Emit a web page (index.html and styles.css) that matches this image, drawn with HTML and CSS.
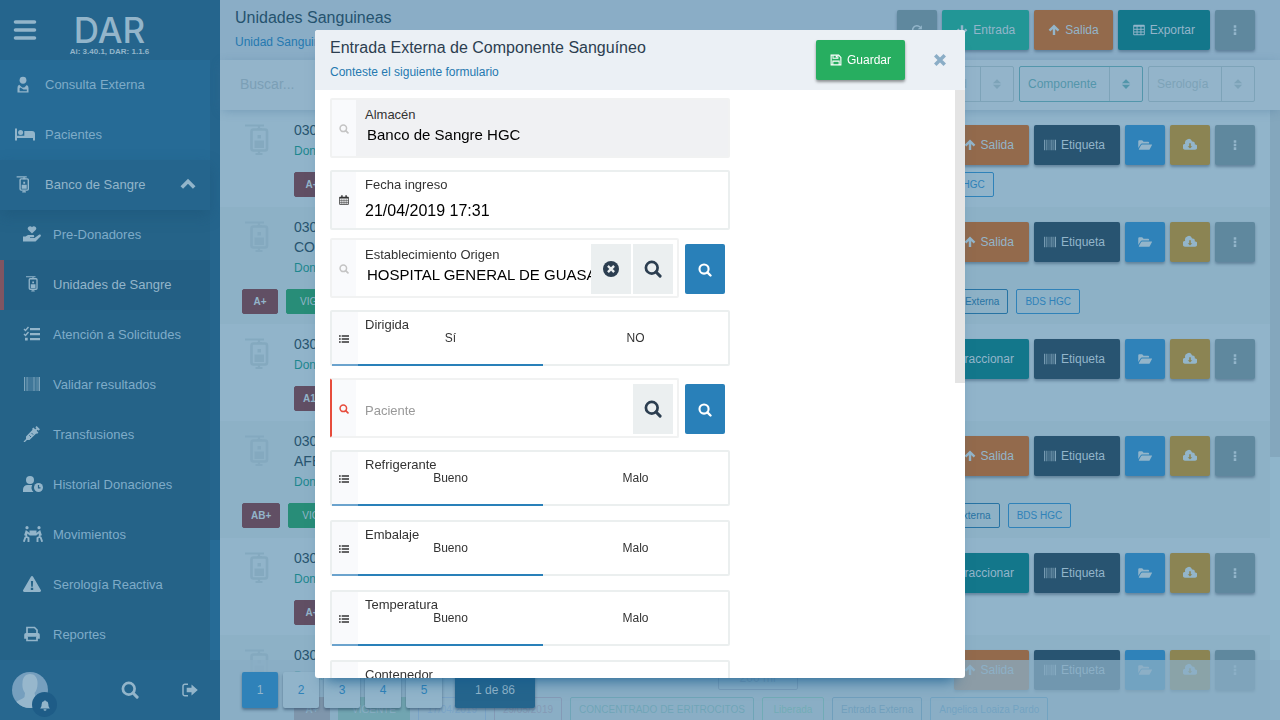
FILE: index.html
```html
<!DOCTYPE html>
<html lang="es">
<head>
<meta charset="utf-8">
<title>Unidades Sanguineas</title>
<link rel="stylesheet" href="styles.css">
</head>
<body>
<svg class="sprite" aria-hidden="true">
  <symbol id="i-search" viewBox="0 0 16 16"><circle cx="6.900" cy="6.900" r="5.200" fill="none" stroke="currentColor" stroke-width="2.400"/><path d="M10.700 10.700l3.600 3.600" stroke="currentColor" stroke-width="2.700" stroke-linecap="round"/></symbol>
  <symbol id="i-up" viewBox="0 0 16 16"><path d="M8 14.5V3M2 8.800L8 2.8l6 6" fill="none" stroke="currentColor" stroke-width="3.200"/></symbol>
  <symbol id="i-down" viewBox="0 0 16 16"><path d="M8 1.500V13M2 7.200L8 13.200l6-6" fill="none" stroke="currentColor" stroke-width="3.200"/></symbol>
  <symbol id="i-table" viewBox="0 0 16 16"><path fill-rule="evenodd" d="M1.500 1h13a1.200 1.200 0 0 1 1.200 1.200v11.600a1.200 1.200 0 0 1-1.200 1.200h-13A1.200 1.200 0 0 1 .3 13.800V2.200A1.200 1.200 0 0 1 1.500 1zM1.500 3.800v2.600h3.300V3.800zm4.500 0v2.600h4V3.800zm5.200 0v2.600h3.300V3.800zM1.500 7.600v2.400h3.300V7.600zm4.500 0v2.400h4V7.600zm5.200 0v2.400h3.300V7.600zM1.500 11.200v2.500h3.300v-2.500zm4.500 0v2.500h4v-2.500zm5.200 0v2.500h3.300v-2.500z" fill="currentColor"/></symbol>
  <symbol id="i-dots" viewBox="0 0 16 16"><path d="M6.300 1.500h3.400v3.400H6.300zM6.300 6.300h3.400v3.400H6.300zM6.300 11.100h3.400v3.400H6.300z" fill="currentColor"/></symbol>
  <symbol id="i-refresh" viewBox="0 0 16 16"><path d="M13 10.500A5.700 5.700 0 1 1 12 4" fill="none" stroke="currentColor" stroke-width="2"/><path d="M14.500 1.500V7H9z" fill="currentColor"/></symbol>
  <symbol id="i-barcode" viewBox="0 0 16 16"><path d="M0 1h1.200v14H0zM14.500 1H16v14h-1.500z" fill="currentColor" opacity=".8"/><path d="M2.200 1h2v14h-2zM9 1h2.500v14H9zM12.300 1h1.500v14h-1.500z" fill="currentColor" opacity=".5"/><path d="M4.200 1h4.800v14H4.200z" fill="currentColor" opacity=".25"/></symbol>
  <symbol id="i-folder" viewBox="0 0 16 16"><path d="M.3 11.500V3.800a1.200 1.200 0 0 1 1.200-1.200h3.300L6.300 4.200h5.200a1.200 1.200 0 0 1 1.200 1.200v1H4.600a2 2 0 0 0-1.700 1z" fill="currentColor"/><path d="M4.600 7.400h11c.4 0 .6.400.4.700l-2.600 4.700a1.200 1.200 0 0 1-1 .600H1.400c-.4 0-.600-.400-.400-.700l2.600-4.700a1.200 1.200 0 0 1 1-.6z" fill="currentColor"/></symbol>
  <symbol id="i-cloud" viewBox="0 0 16 16"><path fill-rule="evenodd" d="M13.400 7a2.400 2.400 0 0 0-3-3A4 4 0 0 0 2.500 6.500 3.500 3.500 0 0 0 3.500 13.500h9.300A3.200 3.200 0 0 0 13.400 7zM10.600 9.300L8 11.900 5.400 9.300h1.700V5.900h1.800v3.400z" fill="currentColor"/></symbol>
  <symbol id="i-sort" viewBox="0 0 16 16"><path d="M2.500 7L8 1.500 13.500 7zM2.500 9L8 14.500 13.500 9z" fill="currentColor"/></symbol>
  <symbol id="i-save" viewBox="0 0 16 16"><path d="M1.500 1.500h10l3 3v10h-13z" fill="none" stroke="currentColor" stroke-width="1.500"/><path d="M4 1.500v4.200h6.500V1.500M3.800 14.500V9.500h8.400v5" fill="none" stroke="currentColor" stroke-width="1.400"/><path d="M7.700 2h1.800v2.700H7.700z" fill="currentColor"/></symbol>
  <symbol id="i-close" viewBox="0 0 16 16"><path d="M4 4l8 8M12 4l-8 8" stroke="currentColor" stroke-width="4" stroke-linecap="square"/></symbol>
  <symbol id="i-clear" viewBox="0 0 16 16"><circle cx="8" cy="8" r="8" fill="currentColor"/><path d="M5.800 5.800l4.400 4.400M10.200 5.800l-4.400 4.400" stroke="#ebeff0" stroke-width="2.400" stroke-linecap="square"/></symbol>
  <symbol id="i-calendar" viewBox="0 0 16 16"><path d="M1 3.500h14V15H1z" fill="none" stroke="currentColor" stroke-width="1.300"/><path d="M1 3h14v2.500H1zM3.500.5h2.300v4H3.500zM10.200.5h2.300v4h-2.300z" fill="currentColor"/><path d="M4.500 6v9M8 6v9M11.500 6v9M1 9h14M1 12h14" stroke="currentColor" stroke-width=".8"/></symbol>
  <symbol id="i-list" viewBox="0 0 16 16"><path d="M0 2h2.700v2.400H0zM0 6.800h2.700v2.400H0zM0 11.600h2.700V14H0zM4.300 2H16v2.400H4.300zM4.300 6.800H16v2.400H4.300zM4.300 11.600H16V14H4.300z" fill="currentColor"/></symbol>
  <symbol id="i-menu" viewBox="0 0 24 20"><path d="M2.500 2h19M2.500 10h19M2.500 18h19" stroke="currentColor" stroke-width="3.600" stroke-linecap="round"/></symbol>
  <symbol id="i-doctor" viewBox="0 0 16 20"><circle cx="8" cy="5" r="4" fill="currentColor"/><path fill-rule="evenodd" d="M1.500 19.500V14a4 4 0 0 1 2-3.700L7 13.500h2.500l3-3a4 4 0 0 1 2 3.500v5.500zM4 17.800h8.500v-2H8.600L5 13.500l-1 1z" fill="currentColor"/></symbol>
  <symbol id="i-bed" viewBox="0 0 20 16"><path d="M0 2.500h2v7.200h7.300V5H17a3 3 0 0 1 3 3v6.500h-2V12H2v2.500H0z" fill="currentColor"/><circle cx="5.600" cy="6.600" r="2.500" fill="currentColor"/></symbol>
  <symbol id="i-bag" viewBox="0 0 24 32"><path d="M0 1.500h19M14 1v4M14 27v4M10.500 30h7" fill="none" stroke="currentColor" stroke-width="2.200"/><rect x="6.500" y="5.500" width="15.500" height="21" rx="2" fill="none" stroke="currentColor" stroke-width="2.600"/><path d="M9.500 16.500H19V24H9.500zM12.500 11h3.500v3.500h-3.500zM12 4h5v2h-5z" fill="currentColor"/></symbol>
  <symbol id="i-hand" viewBox="0 0 18 16"><path d="M9 7.500L5.400 4a2.200 2.200 0 0 1 0-3A2.300 2.300 0 0 1 9 1.300 2.300 2.300 0 0 1 12.600 1a2.200 2.200 0 0 1 0 3zM0 10.500h2.500L5 9h5c1.600 0 1.600 2.300 0 2.300H7v.700h4.500L16 8.700c1.300-.8 2.600.7 1.500 1.800L12.500 15.500H0z" fill="currentColor"/></symbol>
  <symbol id="i-tasks" viewBox="0 0 16 16"><path d="M0 3l1.500 1.500L4.500 1M0 8l1.500 1.500L4.500 6" fill="none" stroke="currentColor" stroke-width="1.400"/><path d="M6 2h10v2.200H6zM6 7h10v2.200H6zM6 12h10v2.200H6zM1 11.800h2.700v2.700H1z" fill="currentColor"/></symbol>
  <symbol id="i-syringe" viewBox="0 0 16 16"><path d="M0 16l3-3" stroke="currentColor" stroke-width="1.300"/><path d="M2 14v-3.500L9.300 3 13 6.700 5.500 14zM8 3l1.400-1.400 5 5L13 8z" fill="currentColor"/><path d="M11.500 4.500l2-2M12 .7L15.300 4" stroke="currentColor" stroke-width="1.800"/><path d="M5.300 9.300l1.700 1.700M7.500 7l1.700 1.700" stroke="#256388" stroke-width=".9"/></symbol>
  <symbol id="i-userclock" viewBox="0 0 20 16"><circle cx="7" cy="4" r="4" fill="currentColor"/><path d="M0 16v-2.500A4.500 4.500 0 0 1 4.500 9h4.700a6 6 0 0 0 1.300 7z" fill="currentColor"/><circle cx="15.500" cy="11.500" r="4.500" fill="currentColor"/><path d="M15.500 9v2.800h2" fill="none" stroke="#256388" stroke-width="1.200"/></symbol>
  <symbol id="i-carry" viewBox="0 0 20 16"><circle cx="4" cy="1.700" r="1.600" fill="currentColor"/><circle cx="16" cy="1.700" r="1.600" fill="currentColor"/><path d="M6.500 4.500h7v5h-7z" fill="currentColor"/><path d="M2 9.500L3.300 5.500 7 8.500M3.300 6v4.500L5.500 12v4M2.500 11L.8 15.800M18 9.500l-1.300-4L13 8.500M16.700 6v4.500L14.500 12v4M17.500 11l1.700 4.800" fill="none" stroke="currentColor" stroke-width="1.900"/></symbol>
  <symbol id="i-warn" viewBox="0 0 18 16"><path fill-rule="evenodd" d="M7.900.7a1.300 1.300 0 0 1 2.200 0l7.700 13.200a1.300 1.300 0 0 1-1.100 2H1.300a1.300 1.300 0 0 1-1.100-2zM7.900 5l.3 5.700h1.600l.3-5.700zM7.800 11.800v2.100h2.400v-2.100z" fill="currentColor"/></symbol>
  <symbol id="i-print" viewBox="0 0 16 16"><path d="M3 8V1.500h7.500L13 4v4M3 11v3.500h10V11" fill="none" stroke="currentColor" stroke-width="1.700"/><path d="M2 7h12a1.800 1.800 0 0 1 1.800 1.800v4H12.500v-2h-9v2H.2v-4A1.800 1.800 0 0 1 2 7z" fill="currentColor"/></symbol>
  <symbol id="i-chevron" viewBox="0 0 16 12"><path d="M1.800 9.500L8 3.300l6.200 6.200" fill="none" stroke="currentColor" stroke-width="3.600"/></symbol>
  <symbol id="i-exit" viewBox="0 0 16 14"><path d="M6 1.200H3A1.900 1.900 0 0 0 1 3.100v7.800a1.900 1.900 0 0 0 2 1.900h3" fill="none" stroke="currentColor" stroke-width="1.500"/><path d="M4.700 4.700h4.800V1.500l6.300 5.500-6.300 5.500V9.300H4.700z" fill="currentColor"/></symbol>
  <symbol id="i-bell" viewBox="0 0 16 16"><path d="M1.500 12.500C3 11 3.500 9.500 3.500 7A4.500 4.500 0 0 1 7 2.600a1 1 0 0 1 2 0A4.500 4.500 0 0 1 12.500 7c0 2.500.5 4 2 5.500zM6 13.500h4a2 2 0 0 1-4 0z" fill="currentColor"/></symbol>
</svg>

<div class="app">
  <aside class="sidebar">
    <header class="brand">
      <button class="plain" aria-label="Menú"><svg class="menu-icon"><use href="#i-menu"/></svg></button>
      <div class="logo"><strong>DAR</strong><small>Ai: 3.40.1, DAR: 1.1.6</small></div>
    </header>
    <nav class="nav">
      <a href="#"><svg class="slim"><use href="#i-doctor"/></svg>Consulta Externa</a>
      <a href="#"><svg class="ic20"><use href="#i-bed"/></svg>Pacientes</a>
      <a href="#" class="open"><svg class="slim"><use href="#i-bag"/></svg>Banco de Sangre<svg class="chev"><use href="#i-chevron"/></svg></a>
      <div class="sub">
        <a href="#"><svg><use href="#i-hand"/></svg>Pre-Donadores</a>
        <a href="#" class="current"><svg><use href="#i-bag"/></svg>Unidades de Sangre</a>
        <a href="#"><svg><use href="#i-tasks"/></svg>Atención a Solicitudes</a>
        <a href="#"><svg><use href="#i-barcode"/></svg>Validar resultados</a>
        <a href="#"><svg><use href="#i-syringe"/></svg>Transfusiones</a>
        <a href="#"><svg class="wide"><use href="#i-userclock"/></svg>Historial Donaciones</a>
        <a href="#"><svg class="wide"><use href="#i-carry"/></svg>Movimientos</a>
        <a href="#"><svg><use href="#i-warn"/></svg>Serología Reactiva</a>
        <a href="#"><svg><use href="#i-print"/></svg>Reportes</a>
      </div>
    </nav>
    <footer class="userbar">
      <button class="plain user" aria-label="Usuario">
        <svg class="avatar" viewBox="0 0 36 36"><defs><clipPath id="face"><circle cx="18" cy="18" r="18"/></clipPath></defs><g clip-path="url(#face)"><path d="M0 0h36v36H0z" fill="#769fbe"/><path d="M18 2c5 0 8 4 7.500 10 0 3-1 7-3 9l1 4c2 2 9 3 10 8v4H2v-4c2-5 8-5 10.500-8l.5-4c-2-3-3-6-2.500-10C10.500 6 13 2 18 2z" fill="#97b7cc"/></g></svg>
        <span class="bell"><svg><use href="#i-bell"/></svg></span>
      </button>
      <button class="plain" aria-label="Buscar"><svg class="ic18"><use href="#i-search"/></svg></button>
      <button class="plain" aria-label="Salir"><svg class="ic16"><use href="#i-exit"/></svg></button>
    </footer>
  </aside>

  <main class="main">
    <header class="topbar">
      <div class="titles"><h1>Unidades Sanguineas</h1><a href="#">Unidad Sanguinea</a></div>
      <div class="actions">
        <button class="btn gray" aria-label="Actualizar"><svg><use href="#i-refresh"/></svg></button>
        <button class="btn teal"><svg><use href="#i-down"/></svg>Entrada</button>
        <button class="btn orange"><svg><use href="#i-up"/></svg>Salida</button>
        <button class="btn cyan"><svg><use href="#i-table"/></svg>Exportar</button>
        <button class="btn gray" aria-label="Más"><svg><use href="#i-dots"/></svg></button>
      </div>
    </header>
    <div class="filters">
      <input type="text" placeholder="Buscar..." aria-label="Buscar">
      <div class="combo"><select aria-label="Unidad"><option>Unidad</option></select><svg><use href="#i-sort"/></svg></div>
      <div class="combo on"><select aria-label="Componente"><option>Componente</option></select><svg><use href="#i-sort"/></svg></div>
      <div class="combo"><select aria-label="Serología"><option>Serología</option></select><svg><use href="#i-sort"/></svg></div>
    </div>
    <div class="content">
      <div class="rows" id="rows"></div>
      <div class="track"><div class="thumb"></div></div>
      <div class="pager">
        <button class="page now">1</button><button class="page">2</button><button class="page">3</button><button class="page">4</button><button class="page">5</button>
        <span class="count">1 de 86</span>
      </div>
    </div>
  </main>
</div>

<div class="overlay">
  <section class="modal" role="dialog" aria-labelledby="modal-title">
    <header class="modal-head">
      <div class="titles"><h2 id="modal-title">Entrada Externa de Componente Sanguíneo</h2><p>Conteste el siguiente formulario</p></div>
      <button class="btn save"><svg><use href="#i-save"/></svg>Guardar</button>
      <button class="plain close" aria-label="Cerrar"><svg class="ic14"><use href="#i-close"/></svg></button>
    </header>
    <div class="modal-body">
      <form class="form">
        <div class="line">
          <div class="field locked"><span class="mark faint"><svg><use href="#i-search"/></svg></span>
            <div class="control"><label for="almacen">Almacén</label><input id="almacen" type="text" value="Banco de Sangre HGC" readonly></div></div>
        </div>
        <div class="line low">
          <div class="field date"><span class="mark"><svg><use href="#i-calendar"/></svg></span>
            <div class="control"><label for="fecha">Fecha ingreso</label><input id="fecha" type="text" value="21/04/2019 17:31"></div></div>
        </div>
        <div class="line">
          <div class="field"><span class="mark faint"><svg><use href="#i-search"/></svg></span>
            <div class="control"><label for="origen">Establecimiento Origen</label><input id="origen" type="text" value="HOSPITAL GENERAL DE GUASAVE"></div>
            <button type="button" class="tool" aria-label="Borrar"><svg class="ic16"><use href="#i-clear"/></svg></button>
            <button type="button" class="tool" aria-label="Buscar"><svg class="ic18"><use href="#i-search"/></svg></button></div>
          <button type="button" class="lookup" aria-label="Buscar establecimiento"><svg class="ic14"><use href="#i-search"/></svg></button>
        </div>
        <div class="line low"><fieldset class="field seg"><legend>Dirigida</legend><span class="mark"><svg><use href="#i-list"/></svg></span>
          <label><input type="radio" name="dirigida" checked>Sí</label><label><input type="radio" name="dirigida">NO</label></fieldset></div>
        <div class="line">
          <div class="field needed"><span class="mark red"><svg><use href="#i-search"/></svg></span>
            <div class="control empty"><input type="text" placeholder="Paciente" aria-label="Paciente"></div>
            <button type="button" class="tool" aria-label="Buscar"><svg class="ic18"><use href="#i-search"/></svg></button></div>
          <button type="button" class="lookup" aria-label="Buscar paciente"><svg class="ic14"><use href="#i-search"/></svg></button>
        </div>
        <div class="line low"><fieldset class="field seg"><legend>Refrigerante</legend><span class="mark"><svg><use href="#i-list"/></svg></span>
          <label><input type="radio" name="refrigerante" checked>Bueno</label><label><input type="radio" name="refrigerante">Malo</label></fieldset></div>
        <div class="line low"><fieldset class="field seg"><legend>Embalaje</legend><span class="mark"><svg><use href="#i-list"/></svg></span>
          <label><input type="radio" name="embalaje" checked>Bueno</label><label><input type="radio" name="embalaje">Malo</label></fieldset></div>
        <div class="line low"><fieldset class="field seg"><legend>Temperatura</legend><span class="mark"><svg><use href="#i-list"/></svg></span>
          <label><input type="radio" name="temperatura" checked>Bueno</label><label><input type="radio" name="temperatura">Malo</label></fieldset></div>
        <div class="line low"><fieldset class="field seg"><legend>Contenedor</legend><span class="mark"><svg><use href="#i-list"/></svg></span>
          <label><input type="radio" name="contenedor" checked>Bueno</label><label><input type="radio" name="contenedor">Malo</label></fieldset></div>
      </form>
      <div class="track"><div class="thumb"></div></div>
    </div>
  </section>
</div>
<script src="rows.js"></script>
</body>
</html>
```

FILE: styles.css
```css
* { box-sizing: border-box; }
html, body { height: 100%; }
body {
  margin: 0;
  overflow: hidden;
  font-family: "Liberation Sans", Arial, sans-serif;
  font-size: 13px;
  color: #333;
}
button, input, select { font: inherit; color: inherit; }
a { text-decoration: none; color: inherit; }
h1, h2, p { margin: 0; font-weight: 400; }
svg { flex: none; }
.sprite { position: absolute; width: 0; height: 0; }
.plain { display: flex; align-items: center; justify-content: center; padding: 0; border: 0; background: none; }
.ic14 { width: 14px; height: 14px; }
.ic16 { width: 16px; height: 16px; }
.ic18 { width: 18px; height: 18px; }
.ic20 { width: 20px; height: 18px; }

.app { display: flex; height: 100%; }

/* Sidebar */
.sidebar {
  display: grid;
  grid-template-rows: 60px 1fr 60px;
  width: 220px;
  flex: none;
  background: #25658d;
  color: #93b5ca;
}
.brand { display: flex; align-items: center; padding-left: 13px; }
.menu-icon { width: 24px; height: 20px; }
.logo { display: flex; flex-direction: column; align-items: center; width: 145px; padding-top: 8px; }
.logo strong { font: 500 35px/36px Inter, "Liberation Sans", sans-serif; }
.logo small { font-size: 8px; line-height: 8px; font-weight: 700; }
.nav {
  display: flex;
  flex-direction: column;
  min-height: 0;
  overflow: hidden;
  padding-right: 10px;
  background: linear-gradient(#25658d, #25658d) top right / 10px 480px no-repeat #266b96;
}
.nav a { display: flex; flex: none; align-items: center; gap: 10px; height: 50px; padding: 0 0 2px 15px; color: #7facc8; }
.nav a svg { color: #93b5ca; }
.nav .slim { width: 16px; height: 17px; margin-right: 4px; }
.nav .open { background: #25658d; color: #93b5ca; box-shadow: 0 6px 14px rgba(25, 80, 115, .4); position: relative; }
.nav .chev { width: 16px; height: 12px; margin-left: auto; margin-right: 14px; }
.sub { flex: 1; background: #256388; }
.nav .sub a { gap: 12px; padding-left: 23px; }
.sub svg { width: 18px; height: 16px; }
.sub .wide { width: 20px; margin-right: -2px; }
.nav .sub .current { border-left: 4px solid #805562; padding-left: 19px; background: #235f84; color: #93b5ca; }
.userbar { display: grid; grid-template-columns: 100px 60px 60px; }
.user { position: relative; justify-content: flex-start; padding-left: 12px; background: #27678f; }
.avatar { width: 36px; height: 36px; }
.bell { position: absolute; left: 32px; top: 32px; display: flex; align-items: center; justify-content: center; width: 25px; height: 25px; border-radius: 50%; background: #1e5c87; }
.bell svg { width: 12px; height: 12px; }

/* Main area */
.main { display: flex; flex: 1; flex-direction: column; min-width: 0; background: #91b4ca; }
.topbar { display: flex; justify-content: space-between; align-items: center; height: 60px; padding: 0 25px 0 15px; background: #8aadc6; }
.titles h1, .titles h2 { font-size: 16px; line-height: 24px; color: #25536f; }
.titles a, .titles p { display: block; font-size: 12px; line-height: 24px; color: #2579b0; }
.topbar .titles { align-self: flex-start; padding-top: 6px; }
.actions { display: flex; gap: 5px; }
.btn {
  display: flex;
  align-items: center;
  justify-content: center;
  gap: 5px;
  height: 40px;
  min-width: 40px;
  padding: 0 14px;
  border: 0;
  border-radius: 2px;
  font-size: 12px;
  color: #93b5ca;
  white-space: nowrap;
  box-shadow: 0 2px 3px rgba(30, 60, 90, .4);
}
.btn svg { width: 12px; height: 12px; }
.teal { background: #229696; }
.orange { background: #936a4c; }
.cyan { background: #13778b; }
.gray { background: #5f889e; }
.navy { background: #285471; }
.blue { background: #2f82b9; }
.gold { background: #8b8453; }
.blue svg, .gold svg { width: 14px; height: 14px; }
.topbar .cyan { padding: 0 15px; }

.filters {
  display: flex;
  gap: 5px;
  height: 50px;
  align-items: center;
  padding: 0 25px 2px 20px;
  background: #93b4ca;
  box-shadow: 0 2px 10px -2px rgba(60, 110, 150, .4);
  position: relative;
  z-index: 1;
}
.filters input { flex: 1; min-width: 0; padding: 0; border: 0; outline: 0; background: none; font-size: 14px; }
.filters input::placeholder { color: #7b9fb6; }
.combo { display: flex; align-items: center; height: 36px; border: 1px solid #7da3b8; border-radius: 2px; color: #7da3b8; font-size: 12px; }
.combo select { height: 100%; padding: 0 12px 0 8px; border: 0; border-right: 1px solid #7da3b8; background: none; appearance: none; }
.combo svg { width: 12px; height: 12px; margin: 0 10px; }
.combo.on { border-color: #5396ab; color: #5396ab; }

.content { position: relative; display: flex; flex: 1; min-height: 0; overflow: hidden; }
.rows { flex: 1; min-width: 0; }
.row { display: grid; grid-template-columns: 52px 1fr auto; padding: 10px 15px 10px 22px; }
.row:nth-child(even) { background: #8db1c6; }
.row > svg { width: 26px; height: 32px; margin: 4px 0 0 2px; color: #84a9bf; }
.text { grid-column: 2; line-height: 20px; color: #28546f; }
.text h3 { margin: 0; font-size: 14px; font-weight: 400; }
.text p { font-size: 12px; line-height: 22px; color: #1d878e; }
.row .actions { align-self: start; padding-top: 5px; height: 42px; }
.row .btn { padding: 0 15px 0 10px; }
.row .blue, .row .gold, .row .gray { padding: 0; }
.volume { width: 80px; height: 40px; margin-right: 151px; padding-top: 6px; border: 1px solid #4f6d94; border-radius: 2px; font-size: 12px; line-height: 14px; text-align: center; color: #4f6d94; }
.tags { grid-column: 2 / -1; display: flex; gap: 8px; padding-top: 10px; }
.tall .tags { grid-column: 1 / -1; }
.tag { min-width: 36px; height: 25px; padding: 0 8px; border: 1px solid currentColor; border-radius: 2px; font-size: 10px; line-height: 23px; text-align: center; color: #2773a3; white-space: nowrap; }
.tag.abo { background: #614f64; border-color: #614f64; color: #93b5ca; font-weight: 700; }
.tag.ok { padding: 0 13px; background: #288d78; border-color: #288d78; color: #93b5ca; }
.tag.unit { color: #2f82b9; }
.tag.made { color: #4c84cc; }
.tag.gone { color: #75608a; }
.tag.comp { color: #218a90; }
.tag.free { min-width: 62px; color: #28a58a; }
.track { flex: none; width: 10px; background: #8fb5cb; }
.thumb { height: 347px; background: #84a7bd; }
.pager {
  position: absolute;
  left: 0;
  right: 0;
  bottom: 0;
  display: flex;
  align-items: center;
  gap: 5px;
  height: 60px;
  padding-left: 22px;
  background: rgba(138, 173, 196, .75);
}
.page, .count { height: 36px; border: 0; border-radius: 2px; font-size: 12px; text-align: center; box-shadow: 0 2px 3px rgba(30, 60, 90, .5); }
.page { width: 36px; padding: 0; background: #91b4ca; color: #2f82b9; }
.now { background: #2f82b9; color: #93b5ca; }
.count { width: 80px; margin-left: 8px; line-height: 36px; background: #25658d; color: #93b5ca; }

/* Dialog */
.overlay { position: fixed; inset: 0; z-index: 2; display: flex; align-items: flex-start; justify-content: center; padding-top: 30px; }
.modal {
  display: flex;
  flex-direction: column;
  width: 650px;
  max-width: 100%;
  max-height: 90vh;
  overflow: hidden;
  border-radius: 3px;
  background: #fff;
  box-shadow: 0 12px 14px -10px rgba(20, 90, 140, .9);
}
.modal-head { display: flex; flex: none; align-items: center; height: 60px; padding: 0 18px 0 15px; background: #ebf0f5; }
.modal-head .titles { flex: 1; align-self: flex-start; padding-top: 6px; }
.modal-head h2 { color: #2c3e50; }
.save { background: #27ae60; color: #fff; box-shadow: 0 2px 3px rgba(0, 0, 0, .4); }
.close { margin-left: 28px; color: #8aadc6; }
.modal-body { display: flex; flex: 1; min-height: 0; }
.form { flex: 1; padding: 0 0 0 15px; overflow: hidden; }
.modal-body .track { background: none; }
.modal-body .thumb { height: 293px; background: #e4e4e4; }
.line { display: flex; gap: 6px; width: 400px; height: 70px; padding: 8px 5px 2px 0; }
.line.low, .line:first-child { padding-right: 0; }
.line.low { padding-top: 10px; padding-bottom: 0; }
.field { position: relative; display: flex; flex: 1; min-width: 0; height: 60px; margin: 0; padding: 0; border: 2px solid #f1f2f2; border-radius: 2px; }
.mark { display: flex; flex: none; align-items: center; justify-content: center; width: 24px; padding-top: 2px; background: #f9fafc; }
.mark svg { width: 10px; height: 10px; }
.faint { color: #c4c4c4; }
.red { color: #e74c3c; }
.control { display: flex; flex: 1; flex-direction: column; min-width: 0; padding: 7px 0 0 9px; }
.control label { line-height: 16px; }
.control input { width: 100%; height: 23px; padding: 0 0 0 2px; border: 0; outline: 0; background: none; font-size: 15px; color: #000; }
.locked .control { background: #f0f1f3; }
.low .field { border-color: #ebefef; }
.date .control { padding-top: 5px; }
.date .mark { padding-top: 0; }
.date input { height: 35px; padding: 0; font-size: 16px; }
.control.empty { justify-content: center; padding-top: 4px; }
.empty input { padding: 0; font-size: 13px; }
.empty input::placeholder { color: #999; }
.needed { border-left-color: #e74c3c; }
.tool { display: flex; align-items: center; justify-content: center; width: 40px; height: 50px; margin-top: 4px; padding: 0; border: 0; background: #ebeff0; color: #2c3e50; }
.tool + .tool { margin-left: 2px; }
.tool:last-child { margin-right: 4px; }
.lookup { display: flex; align-items: center; justify-content: center; width: 40px; height: 50px; margin-top: 6px; padding: 2px 0 0; border: 0; border-radius: 2px; background: #2980b9; color: #fff; }
.seg { height: 56px; }
.seg legend { position: absolute; left: 33px; top: 5px; padding: 0; line-height: 16px; }
.seg .mark { width: 26px; padding-right: 2px; box-shadow: 0 2px 0 #6ba3cd; }
.seg label { display: flex; flex: 1; align-items: center; justify-content: center; font-size: 12px; }
.seg label:has(:checked) { box-shadow: 0 2px 0 #2980b9; }
.seg input { position: absolute; opacity: 0; }
```

FILE: rows.js
```js
const icon = (name) => `<svg><use href="#i-${name}"/></svg>`;
const dates = [["made", "17/04/2019"], ["gone", "29/05/2019"]];
const state = [["free", "Liberada"], ["", "Entrada Externa"]];
const site = ["unit", "BDS HGC"];
const units = [
  { title: ["0300119000214"], act: "Salida", tags: [["abo", "A+"], ["ok", "VIGENTE"], ...dates, ["comp", "CONCENTRADO DE ERITROCITOS"], ...state, site] },
  { title: ["0300119000213", "CONCENTRADO LEUCORREDUCIDO"], act: "Salida", tags: [["abo", "A+"], ["ok", "VIGENTE"], ...dates, ["comp", "CONCENTRADO DE ERITROCITOS LEUCORREDUCIDO FILTRO."], ...state, site] },
  { title: ["0300119000212"], act: "Fraccionar", tags: [["abo", "A1+"], ["ok", "VIGENTE"]] },
  { title: ["0300119000211", "AFERESIS PLAQUETARIA"], act: "Salida", tags: [["abo", "AB+"], ["ok", "VIGENTE"], ...dates, ["comp", "AFERESIS PLAQUETARIA LEUCORREDUCIDA POR FILTRADO"], ...state, site] },
  { title: ["0300119000210"], act: "Fraccionar", tags: [["abo", "A+"], ["ok", "VIGENTE"]] },
  { title: ["0300119000209"], act: "Salida", volume: "200 ml", tags: [["abo", "A+"], ["ok", "VIGENTE"], ...dates, ["comp", "CONCENTRADO DE ERITROCITOS"], ...state, ["unit", "Angelica Loaiza Pardo"]] },
];
document.getElementById("rows").innerHTML = units.map((u) => `
  <article class="row ${u.title.length > 1 ? "tall" : ""}">
    ${icon("bag")}
    <div class="text"><h3>${u.title.join("<br>")}</h3><p>Donador</p></div>
    <div class="actions">
      ${u.volume ? `<div class="volume">Volumen<br>${u.volume}</div>` : ""}
      <button class="btn ${u.act === "Salida" ? "orange" : "cyan"}">${icon(u.act === "Salida" ? "up" : "table")}${u.act}</button>
      <button class="btn navy">${icon("barcode")}Etiqueta</button>
      <button class="btn blue" aria-label="Abrir">${icon("folder")}</button>
      <button class="btn gold" aria-label="Descargar">${icon("cloud")}</button>
      <button class="btn gray" aria-label="Más">${icon("dots")}</button>
    </div>
    <div class="tags">${u.tags.map(([kind, label]) => `<span class="tag ${kind}">${label}</span>`).join("")}</div>
  </article>`).join("");
```
